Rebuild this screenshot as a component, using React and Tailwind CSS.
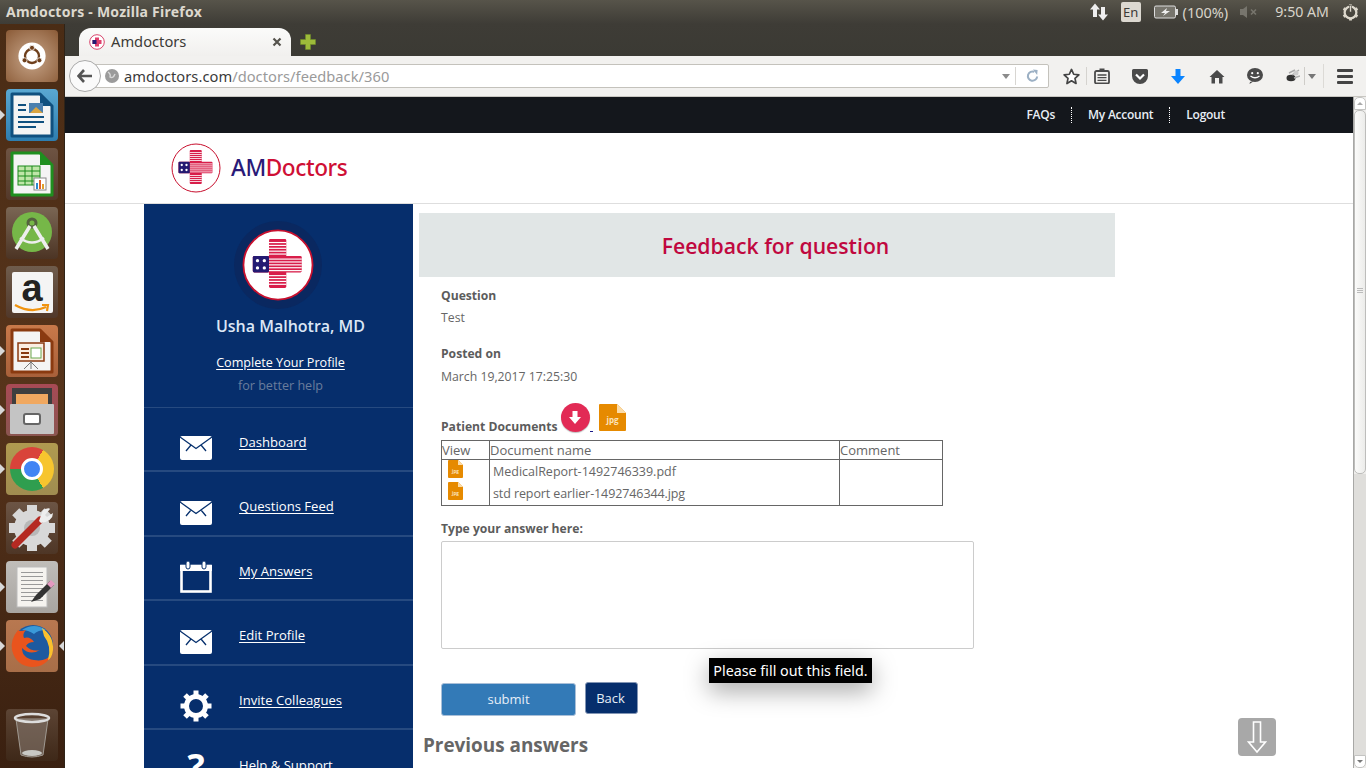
import React from "react";

const Logo = ({ size, ring = 2 }) => (
  <svg width={size} height={size} viewBox="0 0 100 100">
    <circle cx="50" cy="50" r="48" fill="#fff" stroke="#c8102e" strokeWidth={ring} />
    <rect x="37.5" y="14" width="24" height="68" rx="2" fill="#d81e4a" />
    <rect x="15" y="37.5" width="68" height="23" rx="2" fill="#d81e4a" />
    {[18, 22, 26, 30, 34, 41, 45, 49, 53, 57, 64, 68, 72, 76].map((y) => (
      <rect key={y} x={37.5} y={y} width={y > 36 && y < 62 ? 45.5 : 24} height="1.6" fill="#fff" />
    ))}
    <rect x="15" y="37.5" width="22.5" height="23" rx="2" fill="#241a72" />
    {[[21.5, 44], [31, 44], [21.5, 54], [31, 54]].map(([x, y]) => (
      <circle key={x + "-" + y} cx={x} cy={y} r="2.3" fill="#fff" />
    ))}
  </svg>
);

const Mail = () => (
  <svg width="32" height="24" viewBox="0 0 32 24">
    <rect x="0" y="0" width="32" height="24" rx="2" fill="#fff" />
    <path d="M0 1 L16 12.5 L32 1 M11 9 L6 15 M21 9 L26 15" fill="none" stroke="#06306d" strokeWidth="1.3" />
  </svg>
);

const Calendar = () => (
  <svg width="32" height="32" viewBox="0 0 32 32">
    <rect x="1.5" y="5" width="29" height="25.5" fill="none" stroke="#fff" strokeWidth="2.6" />
    <rect x="0" y="4" width="32" height="6" fill="#fff" />
    <rect x="6" y="0" width="4" height="8" rx="2" fill="#fff" stroke="#06306d" strokeWidth="1" />
    <rect x="22" y="0" width="4" height="8" rx="2" fill="#fff" stroke="#06306d" strokeWidth="1" />
  </svg>
);

const Gear = () => (
  <svg width="32" height="32" viewBox="0 0 32 32">
    <circle cx="16" cy="16" r="9.5" fill="none" stroke="#fff" strokeWidth="5" />
    {[0, 45, 90, 135, 180, 225, 270, 315].map((a) => (
      <rect key={a} x="13.5" y="0.5" width="5" height="6" fill="#fff" transform={`rotate(${a} 16 16)`} />
    ))}
  </svg>
);

const FileIcon = ({ w, h }) => {
  const f = Math.round(w * 0.32);
  return (
    <svg width={w} height={h} viewBox={`0 0 ${w} ${h}`} className="block">
      <path d={`M1 0 H${w - f} L${w} ${f} V${h - 1} a1 1 0 0 1 -1 1 H1 a1 1 0 0 1 -1 -1 V1 a1 1 0 0 1 1 -1 Z`} fill="#e68a00" />
      <path d={`M${w - f} 0 L${w} ${f} H${w - f} Z`} fill="#fbdca8" />
      <text x={w / 2} y={h * 0.72} fontSize={w * 0.3} fontWeight="700" textAnchor="middle" fill="#fbe3bc" fontFamily="Open Sans, sans-serif">jpg</text>
    </svg>
  );
};

const DockIcon = ({ bg, children, left, right }) => (
  <div className="relative h-[52px] w-full mb-[7px] flex justify-center">
    {left && <span className="absolute left-0 top-[21px] w-0 h-0 border-y-[5px] border-y-transparent border-l-[5px] border-l-[#d8d8d8]" />}
    <div className="w-[52px] h-[52px] rounded-[4px] flex items-center justify-center overflow-hidden" style={{ background: bg }}>
      {children}
    </div>
    {right && <span className="absolute right-0 top-[21px] w-0 h-0 border-y-[5px] border-y-transparent border-r-[5px] border-r-[#d8d8d8]" />}
  </div>
);

const Doc = ({ frame, children }) => (
  <svg width="44" height="46" viewBox="0 0 44 46">
    <path d="M2 2 H30 L42 14 V44 H2 Z" fill="#f4f4f4" stroke={frame} strokeWidth="3" strokeLinejoin="round" />
    <path d="M30 2 L42 14 H30 Z" fill={frame} />
    {children}
  </svg>
);

const Dock = () => (
  <aside className="w-[65px] shrink-0 h-full flex flex-col pt-[6px] bg-gradient-to-b from-[#4a2c15] via-[#57341b] to-[#3a2010] border-r border-[#2f2317] overflow-hidden">
    <DockIcon bg="radial-gradient(circle at 50% 55%, #c8a68a, #8a5a36)">
      <svg width="28" height="28" viewBox="0 0 36 36">
        <circle cx="18" cy="18" r="17.5" fill="#fff" />
        <circle cx="18" cy="18" r="9" fill="none" stroke="#6e3f1c" strokeWidth="3" />
        <circle cx="18" cy="7.5" r="3.2" fill="#6e3f1c" stroke="#fff" />
        <circle cx="8.5" cy="23.5" r="3.2" fill="#6e3f1c" stroke="#fff" />
        <circle cx="27.5" cy="23.5" r="3.2" fill="#6e3f1c" stroke="#fff" />
      </svg>
    </DockIcon>
    <DockIcon bg="linear-gradient(#5aa8d2,#2e7eb0)" left>
      <Doc frame="#10507f">
        <rect x="8" y="12" width="8" height="2" fill="#10507f" />
        <rect x="8" y="17" width="8" height="2" fill="#10507f" />
        <rect x="19" y="11" width="14" height="10" fill="#4a7fae" />
        <path d="M20 21 L26 15 L33 21 Z" fill="#d9a441" />
        <rect x="8" y="24" width="26" height="2" fill="#10507f" />
        <rect x="8" y="29" width="26" height="2" fill="#10507f" />
        <rect x="8" y="34" width="18" height="2" fill="#10507f" />
      </Doc>
    </DockIcon>
    <DockIcon bg="linear-gradient(#6e5443,#54392a)">
      <Doc frame="#1f8f1f">
        <rect x="8" y="15" width="22" height="19" fill="#bfe6a8" stroke="#1a8a1a" />
        <path d="M8 20 H30 M8 25 H30 M8 30 H30 M15 15 V34 M22 15 V34" stroke="#1a8a1a" />
        <rect x="24" y="27" width="12" height="12" fill="#fff" stroke="#888" />
        <rect x="26" y="32" width="2" height="6" fill="#2b8ad0" />
        <rect x="29" y="29" width="2" height="9" fill="#e0622a" />
        <rect x="32" y="33" width="2" height="5" fill="#e0a02a" />
      </Doc>
    </DockIcon>
    <DockIcon bg="linear-gradient(#7a6654,#4c3424)">
      <svg width="42" height="44" viewBox="0 0 42 44">
        <circle cx="21" cy="21" r="20" fill="#76b748" />
        <circle cx="21" cy="12" r="4" fill="none" stroke="#54623f" strokeWidth="3" />
        <path d="M5 38 L19 15 M37 38 L23 15" stroke="#eee" strokeWidth="3.5" />
        <path d="M9 27 Q21 36 33 27" fill="none" stroke="#eee" strokeWidth="2.5" />
      </svg>
    </DockIcon>
    <DockIcon bg="linear-gradient(#6f5c4c,#51382a)">
      <div className="w-[41px] h-[41px] bg-[#f4f4f4] rounded-[2px] flex flex-col items-center justify-start">
        <span className="font-['Liberation_Sans',sans-serif] font-bold text-[38px] leading-[32px] text-[#222]">a</span>
        <svg width="38" height="9" viewBox="0 0 36 9">
          <path d="M1 1 Q17 10 32 3 M28 1 L34 1 L33 7" fill="none" stroke="#f0930f" strokeWidth="2.2" />
        </svg>
      </div>
    </DockIcon>
    <DockIcon bg="linear-gradient(#c8794a,#a8603a)" left>
      <Doc frame="#8a3a10">
        <rect x="8" y="15" width="26" height="18" fill="#fbeee2" stroke="#8a3a10" strokeWidth="1.5" />
        <rect x="11" y="20" width="8" height="2" fill="#8a3a10" />
        <rect x="11" y="24" width="8" height="2" fill="#8a3a10" />
        <rect x="11" y="28" width="8" height="2" fill="#8a3a10" />
        <rect x="21" y="20" width="10" height="10" fill="#fff" stroke="#6aa84f" />
        <path d="M21 41 L21 33 M21 34 L14 41 M21 34 L28 41" stroke="#777" strokeWidth="1" />
      </Doc>
    </DockIcon>
    <DockIcon bg="linear-gradient(#a84a55,#8a5550)" left>
      <svg width="44" height="48" viewBox="0 0 44 48">
        <rect x="2" y="2" width="40" height="16" fill="#3e3e3e" />
        <rect x="6" y="8" width="32" height="10" fill="#f0a860" />
        <rect x="0" y="18" width="44" height="30" rx="1" fill="#c4c4c4" />
        <rect x="14" y="28" width="16" height="10" rx="2" fill="#fff" stroke="#666" strokeWidth="2" />
      </svg>
    </DockIcon>
    <DockIcon bg="linear-gradient(#b09a50,#a08c50)" left>
      <div className="w-11 h-11 rounded-full relative" style={{ background: "conic-gradient(from 30deg, #f7c52e 0 120deg, #2f9e4f 120deg 240deg, #d9433a 240deg 360deg)" }}>
        <div className="absolute inset-[11px] rounded-full bg-[#4285f4] border-[3px] border-white" />
      </div>
    </DockIcon>
    <DockIcon bg="linear-gradient(#6c5545,#4e3626)">
      <svg width="46" height="46" viewBox="0 0 46 46">
        <circle cx="23" cy="23" r="18" fill="#d8d8d8" />
        {[0, 45, 90, 135, 180, 225, 270, 315].map((a) => (
          <rect key={a} x="18" y="0" width="10" height="9" fill="#d8d8d8" transform={`rotate(${a} 23 23)`} />
        ))}
        <circle cx="23" cy="23" r="8" fill="#b8b8b8" />
        <path d="M6 40 L31 15" stroke="#b52a22" strokeWidth="7" strokeLinecap="round" />
        <path d="M30 16 L34 5 Q40 2 41 4 L36 10 L38 12 L44 8 Q44 16 32 18 Z" fill="#eee" />
      </svg>
    </DockIcon>
    <DockIcon bg="linear-gradient(#c0bdb9,#a8a5a1)" left>
      <svg width="46" height="46" viewBox="0 0 46 46">
        <rect x="8" y="3" width="30" height="40" fill="#f5f3ef" stroke="#bbb" />
        {[8, 12, 16, 20, 24, 28, 32, 36].map((y) => (
          <rect key={y} x="12" y={y} width="22" height="1" fill="#999" />
        ))}
        <path d="M22 38 L27 31 L41 17 L45 21 L31 35 Z" fill="#333" />
        <path d="M38 20 L42 16 L46 20 L42 24 Z" fill="#e49ac0" />
      </svg>
    </DockIcon>
    <DockIcon bg="linear-gradient(#b87850,#a86e48)" left right>
      <svg width="48" height="48" viewBox="0 0 48 48">
        <circle cx="25" cy="23" r="20" fill="#1d5aa0" />
        <path d="M14 8 Q26 0 38 8 Q30 8 26 12 Q20 8 14 8 Z" fill="#3a9ad9" />
        <path d="M10 8 Q2 18 4 28 Q8 44 24 45 Q38 45 44 32 Q38 40 26 38 Q14 36 14 26 Q22 34 32 28 Q24 30 18 24 Q20 20 26 20 Q22 14 16 16 Q14 12 18 8 Q12 10 10 8 Z" fill="#e9541d" />
        <path d="M34 6 Q46 14 45 28 Q44 36 40 38 Q44 24 36 14 Z" fill="#fbc02d" />
      </svg>
    </DockIcon>
    <div className="h-[31px]" />
    <DockIcon bg="linear-gradient(#5c4434,#3e2818)">
      <svg width="38" height="48" viewBox="0 0 38 48">
        <path d="M3 8 L8 44 Q19 48 30 44 L35 8 Z" fill="#8a7e74" fillOpacity="0.55" stroke="#a09a92" />
        <ellipse cx="19" cy="7" rx="17" ry="4" fill="none" stroke="#ddd" strokeWidth="2.5" />
        <ellipse cx="19" cy="42" rx="10" ry="3" fill="#c8c8c4" />
      </svg>
    </DockIcon>
  </aside>
);

const TopBar = () => (
  <div className="h-6 shrink-0 bg-gradient-to-b from-[#57544a] to-[#3e3c36] flex items-center font-['Noto_Sans',sans-serif]">
    <span className="pl-[6px] text-[14px] font-bold text-[#dcd8ce] leading-none tracking-[0.24px] flex-1">Amdoctors - Mozilla Firefox</span>
    <svg width="18" height="18" viewBox="0 0 18 18" className="mr-[13px]">
      <path d="M5 0.5 L0 6.5 H3 V14 H7 V6.5 H10 Z M13 17.5 L18 11.5 H15 V4 H11 V11.5 H8 Z" fill="#eee" />
    </svg>
    <span className="w-5 h-5 bg-[#dcd8d0] rounded-[2px] text-[13px] leading-5 text-center text-[#3c3b37] mr-[13px]">En</span>
    <svg width="24" height="14" viewBox="0 0 24 14">
      <rect x="0.5" y="1" width="21" height="12" rx="1.5" fill="#77756d" stroke="#ddd" />
      <rect x="22" y="4" width="2" height="6" fill="#ddd" />
      <path d="M13 3 L7 8 H11 L9 11 L16 6 H12 Z" fill="#eee" />
    </svg>
    <span className="text-[14.5px] text-[#d8d4ca] ml-[5px] leading-none">(100%)</span>
    <svg width="18" height="14" viewBox="0 0 18 14" className="ml-[12px]">
      <path d="M0 4 H3 L7 1 V13 L3 10 H0 Z" fill="#77756d" />
      <path d="M11 4.5 L16 9.5 M16 4.5 L11 9.5" stroke="#77756d" strokeWidth="1.6" />
    </svg>
    <span className="text-[14.2px] text-[#d8d4ca] ml-[17px] leading-none">9:50 AM</span>
    <svg width="17" height="18" viewBox="0 0 18 18" className="ml-[13px] mr-[7px]">
      <circle cx="9" cy="9.5" r="6.2" fill="none" stroke="#ddd8cc" strokeWidth="2.4" />
      {[0, 60, 120, 180, 240, 300].map((a) => (
        <rect key={a} x="7.5" y="1" width="3" height="3" fill="#ddd8cc" transform={`rotate(${a} 9 9.5)`} />
      ))}
      <rect x="8" y="2" width="2" height="7" fill="#ddd8cc" stroke="#48463f" strokeWidth="0.6" />
    </svg>
  </div>
);

const TabStrip = () => (
  <div className="h-8 shrink-0 bg-gradient-to-b from-[#3e3c36] to-[#3b3a34] flex items-end pl-[14px] font-['Noto_Sans',sans-serif]">
    <div className="h-[28px] w-[212px] rounded-t-[12px] bg-gradient-to-b from-[#fbfbfa] to-[#f1f0ee] flex items-center pl-[10px] pr-[9px]">
      <svg width="16" height="16" viewBox="0 0 16 16">
        <circle cx="8" cy="8" r="7.3" fill="#fff" stroke="#d9456c" />
        <path d="M6 3.5 H10 V6 H12.5 V10 H10 V12.5 H6 V10 H3.5 V6 H6 Z" fill="#df3f6c" />
        <rect x="3.5" y="6" width="4" height="4" fill="#241a72" />
      </svg>
      <span className="ml-[6px] -mt-[2px] text-[14.7px] text-[#3c3b37] flex-1 leading-none">Amdoctors</span>
      <svg width="10" height="10" viewBox="0 0 10 10">
        <path d="M1.5 1.5 L8.5 8.5 M8.5 1.5 L1.5 8.5" stroke="#55534d" strokeWidth="2.2" />
      </svg>
    </div>
    <svg width="16" height="16" viewBox="0 0 16 16" className="ml-[9px] mb-[6px]">
      <path d="M5.5 0.5 H10.5 V5.5 H15.5 V10.5 H10.5 V15.5 H5.5 V10.5 H0.5 V5.5 H5.5 Z" fill="#9dbb3a" stroke="#6f8f26" strokeWidth="0.6" />
    </svg>
  </div>
);

const NavBar = () => (
  <div className="h-[41px] shrink-0 bg-[#f2f1ef] border-b border-[#c9c7c2] flex items-center pl-[4px] font-['Noto_Sans',sans-serif] relative">
    <div className="relative h-[24px] ml-[14px] w-[966px] bg-white border border-[#c4c2bc] rounded-[2px] flex items-center pl-[21px]">
      <svg width="14" height="14" viewBox="0 0 14 14">
        <circle cx="7" cy="7" r="7" fill="#9b9b9b" />
        <path d="M3 3 Q6 5 5 8 Q8 10 10 5" fill="none" stroke="#d8d8d8" strokeWidth="1.4" />
      </svg>
      <span className="ml-[5px] text-[14.66px] leading-none text-[#3a3a3a] tracking-[0.04px]">amdoctors.com<span className="text-[#9a9a9a]">/doctors/feedback/360</span></span>
      <div className="flex-1" />
      <span className="w-0 h-0 border-x-[4px] border-x-transparent border-t-[5px] border-t-[#8b8b8b] mr-[5px]" />
      <span className="w-px h-[18px] bg-[#d8d6d2]" />
      <svg width="13" height="14" viewBox="0 0 14 14" className="ml-[10px] mr-[9px]">
        <path d="M12 7.5 A5 5 0 1 1 9 2.5" fill="none" stroke="#9cb0c4" strokeWidth="2.2" />
        <path d="M7.5 0 L12.5 0.5 L12 6 Z" fill="#9cb0c4" />
      </svg>
    </div>
    <div className="absolute left-[4px] top-[4px] w-[32px] h-[32px] rounded-full bg-[#fafafa] border border-[#a9a9a9] flex items-center justify-center">
      <svg width="16" height="14" viewBox="0 0 16 14">
        <path d="M7 1 L1.5 7 L7 13 M2 7 H15" fill="none" stroke="#555" strokeWidth="2.6" />
      </svg>
    </div>
    <div className="flex items-center ml-[14px] text-[#4a4a4a]">
      <svg width="17" height="17" viewBox="0 0 18 18">
        <path d="M9 1.5 L11.3 6.6 L16.8 7.2 L12.7 10.9 L13.8 16.4 L9 13.6 L4.2 16.4 L5.3 10.9 L1.2 7.2 L6.7 6.6 Z" fill="#fff" stroke="#444" strokeWidth="1.8" strokeLinejoin="round" />
      </svg>
      <span className="w-px h-[18px] bg-[#d5d3cf] ml-[6px]" />
      <svg width="16" height="16" viewBox="0 0 16 16" className="ml-[7px]">
        <rect x="1" y="3" width="14" height="12.5" rx="1.5" fill="none" stroke="#4a4a4a" strokeWidth="1.8" />
        <rect x="5.5" y="0.5" width="5" height="3.5" fill="#4a4a4a" />
        <path d="M3.5 7 H12.5 M3.5 9.7 H12.5 M3.5 12.4 H12.5" stroke="#4a4a4a" strokeWidth="1.3" />
      </svg>
      <svg width="16" height="15" viewBox="0 0 16 15" className="ml-[22px]">
        <path d="M1.5 0 H14.5 A1.5 1.5 0 0 1 16 1.5 V7 A8 8 0 0 1 0 7 V1.5 A1.5 1.5 0 0 1 1.5 0 Z" fill="#4a4a4a" />
        <path d="M4 5.5 L8 9.5 L12 5.5" fill="none" stroke="#fff" strokeWidth="2.2" />
      </svg>
      <svg width="14" height="15" viewBox="0 0 14 15" className="ml-[23px]">
        <path d="M4.5 0 H9.5 V7 H14 L7 15 L0 7 H4.5 Z" fill="#0a84ff" />
      </svg>
      <svg width="16" height="15" viewBox="0 0 16 15" className="ml-[24px]">
        <path d="M8 1 L0.5 8 H2.5 V14.5 H6 V9 H10 V14.5 H13.5 V8 H15.5 Z" fill="#4a4a4a" />
      </svg>
      <svg width="16" height="16" viewBox="0 0 16 16" className="ml-[22px]">
        <ellipse cx="8" cy="7" rx="8" ry="7" fill="#4a4a4a" />
        <path d="M3 14 L2.5 16 L7 13 Z" fill="#4a4a4a" />
        <circle cx="5.2" cy="5.2" r="1.1" fill="#fff" />
        <circle cx="10.8" cy="5.2" r="1.1" fill="#fff" />
        <path d="M3.5 8 Q8 11.5 12.5 8" fill="none" stroke="#fff" strokeWidth="1.3" />
      </svg>
      <svg width="15" height="14" viewBox="0 0 15 14" className="ml-[22px]">
        <ellipse cx="6" cy="9" rx="4.5" ry="3.2" fill="#333" />
        <path d="M7 6 L14 1 M4 4 L10 1 M9 9 L15 7" stroke="#aaa" strokeWidth="1.5" />
        <circle cx="11" cy="4" r="2.5" fill="#ccc" />
      </svg>
      <span className="w-px h-[18px] bg-[#cfcdc9] ml-[4px]" />
      <span className="w-0 h-0 border-x-[4px] border-x-transparent border-t-[5px] border-t-[#777] ml-[3px]" />
      <span className="w-px h-[24px] bg-[#dcdad6] ml-[7px]" />
      <div className="ml-[13px] flex flex-col gap-[3px]">
        <span className="w-4 h-[3px] bg-[#444] rounded-[1px]" />
        <span className="w-4 h-[3px] bg-[#444] rounded-[1px]" />
        <span className="w-4 h-[3px] bg-[#444] rounded-[1px]" />
      </div>
    </div>
  </div>
);

const MenuRow = ({ icon, label, h = "h-[65px]" }) => (
  <div className={`${h} border-b-2 border-[#264a80] flex items-center pl-[36px] shrink-0`}>
    <span className="w-[32px] flex justify-center mt-[18px]">{icon}</span>
    <a className="ml-[27px] mt-[7px] text-[13.1px] leading-none text-white underline underline-offset-2">{label}</a>
  </div>
);

const Sidebar = () => (
  <div className="w-[269px] shrink-0 bg-[#062e6c] flex flex-col h-[600px]">
    <div className="h-[204px] shrink-0 border-b border-[#264a80] flex flex-col items-center pt-[17px]">
      <div className="w-[88px] h-[88px] rounded-full bg-[#0a2860] flex items-center justify-center -ml-[2px]">
        <Logo size={72} ring={2.5} />
      </div>
      <div className="mt-[5px] ml-[24px] text-[16px] font-semibold leading-[24px] text-[#dbe6f5]">Usha Malhotra, MD</div>
      <a className="mt-[16px] ml-[4px] text-[12.6px] leading-[18px] text-white underline underline-offset-2">Complete Your Profile</a>
      <div className="mt-[5px] ml-[4px] text-[12.6px] leading-[18px] text-[#6a7d9c]">for better help</div>
    </div>
    <MenuRow icon={<Mail />} label="Dashboard" h="h-[64px]" />
    <MenuRow icon={<Mail />} label="Questions Feed" />
    <MenuRow icon={<Calendar />} label="My Answers" h="h-[64px]" />
    <MenuRow icon={<Mail />} label="Edit Profile" />
    <MenuRow icon={<Gear />} label="Invite Colleagues" h="h-[64px]" />
    <div className="h-[64px] flex items-start pl-[36px] pt-[17px] shrink-0">
      <span className="w-[32px] text-center text-[36px] font-bold leading-[40px] text-white">?</span>
      <a className="ml-[27px] mt-[12px] text-[13.1px] leading-none text-white underline underline-offset-2">Help &amp; Support</a>
    </div>
  </div>
);

const Main = () => (
  <div className="w-[696px] ml-[6px] pt-[9px] shrink-0 text-[#666]">
    <h1 className="h-[64px] pl-[17px] bg-[#e1e6e6] text-center text-[21.2px] font-semibold leading-[65px] text-[#c0083f]">Feedback for question</h1>
    <div className="pl-[22px]">
      <div className="mt-[9px] text-[12.15px] font-bold leading-[20px] text-[#5c5c5c]">Question</div>
      <div className="mt-[2px] text-[12.25px] leading-[20px]">Test</div>
      <div className="mt-[16px] text-[12.15px] font-bold leading-[20px] text-[#5c5c5c]">Posted on</div>
      <div className="mt-[3px] text-[12.25px] leading-[20px]">March 19,2017 17:25:30</div>
      <div className="mt-[16px] h-[31px] flex items-end">
        <span className="text-[12.15px] font-bold leading-[20px] text-[#5c5c5c] -mb-[3px]">Patient Documents</span>
        <span className="ml-[3px] w-[29px] h-[29px] rounded-full bg-[#e22a55] flex items-center justify-center mb-[2px] shadow-[0_1px_1px_rgba(0,0,0,0.25)]">
          <svg width="12" height="13" viewBox="0 0 12 13">
            <path d="M3.5 0 H8.5 V6 H12 L6 13 L0 6 H3.5 Z" fill="#fff" />
          </svg>
        </span>
        <span className="w-[3px] h-px bg-[#1a1a8a] mb-[2px]" />
        <span className="ml-[6px] mb-[3px]"><FileIcon w={27} h={27} /></span>
      </div>
      <table className="mt-[6px] w-[502px] border-collapse border border-[#666] text-[13px] leading-[18px] table-fixed">
        <thead>
          <tr>
            <th className="w-[48px] border border-[#666] font-normal text-left h-[18px] p-0 leading-[18px]">View</th>
            <th className="w-[350px] border border-[#666] font-normal text-left h-[18px] p-0 leading-[18px]">Document name</th>
            <th className="border border-[#666] font-normal text-left h-[18px] p-0 leading-[18px]">Comment</th>
          </tr>
        </thead>
        <tbody>
          <tr>
            <td className="border border-[#666] p-0 align-top pl-[6px]">
              <div className="flex flex-col gap-[4px]">
                <FileIcon w={15} h={18} />
                <FileIcon w={15} h={18} />
              </div>
            </td>
            <td className="border border-[#666] p-0 pl-[3px] pt-[1px] align-top text-[12.5px]">
              <div className="leading-[22px]">MedicalReport-1492746339.pdf</div>
              <div className="leading-[22px] tracking-[-0.1px]">std report earlier-1492746344.jpg</div>
            </td>
            <td className="border border-[#666] p-0 h-[44px]" />
          </tr>
        </tbody>
      </table>
      <div className="mt-[13px] text-[12.15px] font-bold leading-[20px] text-[#5c5c5c]">Type your answer here:</div>
      <div className="mt-[2px] w-[533px] h-[108px] rounded-[2px] border border-[#ccc] bg-white" />
      <div className="mt-[33px] flex items-start">
        <button className="mt-[1px] w-[135px] h-[33px] rounded-[3px] border border-[#a9bfd8] bg-[#337ab7] text-[13px] text-[#e6eef7]">submit</button>
        <button className="ml-[9px] w-[53px] h-[32px] rounded-[3px] border border-[#8295b4] bg-[#062e6c] text-[13px] text-[#e6eef7] pr-[2px] pt-[1px]">Back</button>
      </div>
    </div>
    <h2 className="ml-[4px] mt-[15px] text-[18.9px] font-bold leading-[28px] text-[#666]">Previous answers</h2>
  </div>
);

const Scrollbar = () => (
  <div className="w-[13px] shrink-0 bg-[#efeeec] border-l border-[#a8a8a6] flex flex-col items-center h-full">
    <div className="h-[13px] w-[12px] bg-white border border-[#c4c4c2] rounded-t-[5px] flex items-center justify-center">
      <span className="w-0 h-0 border-x-[3px] border-x-transparent border-b-[3px] border-b-[#aaa]" />
    </div>
    <div className="w-[12px] h-[364px] rounded-[5px] bg-gradient-to-r from-[#fbfbfa] to-[#ececea] border border-[#bdbdbb] flex flex-col items-center justify-center gap-[1px] pb-[3px]">
      <span className="w-[6px] h-px bg-[#bbb]" />
      <span className="w-[6px] h-px bg-[#bbb]" />
      <span className="w-[6px] h-px bg-[#bbb]" />
    </div>
    <div className="flex-1 w-[12px] bg-[#dfdedb]" />
    <div className="h-[13px] w-[12px] bg-white border border-[#c4c4c2] rounded-b-[5px] flex items-center justify-center">
      <span className="w-0 h-0 border-x-[3px] border-x-transparent border-t-[3px] border-t-[#777]" />
    </div>
  </div>
);

export default function App() {
  return (
    <div className="w-[1366px] h-[768px] overflow-hidden flex flex-col bg-[#3c3b37]">
      <TopBar />
      <div className="flex-1 flex min-h-0">
        <Dock />
        <div className="flex-1 min-w-0 flex flex-col">
          <TabStrip />
          <NavBar />
          <div className="flex-1 min-h-0 flex font-['Open_Sans',sans-serif] bg-white">
            <div className="relative flex-1 min-w-0 overflow-hidden">
              <div className="h-9 bg-[#14171c] flex items-center justify-end pr-[128px] text-[12px] font-semibold tracking-[-0.25px] text-[#e8eef5]">
                <span>FAQs</span>
                <span className="mx-[16px] h-[16px] border-l border-dotted border-white" />
                <span>My Account</span>
                <span className="mx-[16px] h-[16px] border-l border-dotted border-white" />
                <span>Logout</span>
              </div>
              <div className="h-[71px] bg-white border-b border-[#dedede] flex items-center pl-[106px]">
                <Logo size={50} />
                <span className="ml-[10px] text-[22.6px] font-medium leading-none tracking-[-0.4px] font-['Noto_Sans',sans-serif]">
                  <span className="text-[#2a1a78]">AM</span><span className="text-[#cf0f35]">Doctors</span>
                </span>
              </div>
              <div className="flex pl-[79px]">
                <Sidebar />
                <Main />
              </div>
              <div className="absolute left-[644px] top-[561px] h-[25px] w-[163px] bg-black text-white text-[14.3px] leading-[25px] text-center font-['Noto_Sans',sans-serif] shadow-[0_8px_24px_rgba(0,0,0,0.35)]">Please fill out this field.</div>
              <div className="absolute left-[1173px] top-[621px] w-[38px] h-[38px] rounded-[4px] bg-[#a8a8a8] flex items-center justify-center">
                <svg width="20" height="32" viewBox="0 0 20 32">
                  <path d="M6.5 1 H13.5 V21 H18.5 L10 31 L1.5 21 H6.5 Z" fill="#a8a8a8" stroke="#fff" strokeWidth="1.6" />
                </svg>
              </div>
            </div>
            <Scrollbar />
          </div>
        </div>
      </div>
    </div>
  );
}
